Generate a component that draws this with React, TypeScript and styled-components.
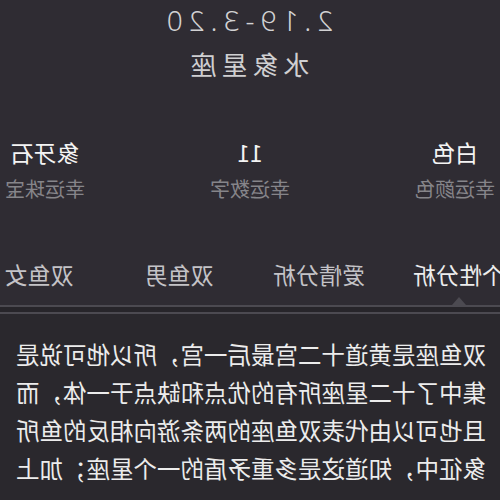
import styled, { createGlobalStyle } from 'styled-components';

const GlobalStyle = createGlobalStyle`
  html, body {
    margin: 0;
    padding: 0;
    background: #2f2c33;
    overflow: hidden;
  }
`;

const stats = [
  { value: '白色', label: '幸运颜色' },
  { value: '11', label: '幸运数字' },
  { value: '象牙石', label: '幸运珠宝' },
];

const tabs = ['个性分析', '爱情分析', '双鱼男', '双鱼女'];

const bodyText =
  '双鱼座是黄道十二宫最后一宫，所以他可说是集中了十二星座所有的优点和缺点于一体，而且也可以由代表双鱼座的两条游向相反的鱼所象征中，知道这是多重矛盾的一个星座；加上';

export default function App() {
  return (
    <>
      <GlobalStyle />
      <Page>
        <Header>
          <DateRange>2.19-3.20</DateRange>
          <Element>水象星座</Element>
        </Header>

        <StatsRow>
          {stats.map(({ value, label }) => (
            <Stat key={label}>
              <StatValue>{value}</StatValue>
              <StatLabel>{label}</StatLabel>
            </Stat>
          ))}
        </StatsRow>

        <TabBar>
          {tabs.map((t, i) => (
            <Tab key={t} active={i === 0}>
              {t}
              {i === 0 && <Marker />}
            </Tab>
          ))}
        </TabBar>
        <Divider />

        <Body>{bodyText}</Body>
      </Page>
    </>
  );
}

//#region STYLED COMPONENTS
const Page = styled.div`
  width: 500px;
  height: 500px;
  overflow: hidden;
  background: #2f2c33;
  transform: scaleX(-1);
  font-family: 'Noto Sans CJK SC', 'Noto Sans', sans-serif;
  display: flex;
  flex-direction: column;
`;

const Header = styled.div`
  display: flex;
  flex-direction: column;
  align-items: center;
`;

const DateRange = styled.div`
  font-family: 'Noto Sans', sans-serif;
  font-size: 28px;
  line-height: 40px;
  letter-spacing: 6px;
  padding-left: 6px;
  color: #d2d2d4;
  font-weight: 300;
`;

const Element = styled.div`
  margin-top: 6px;
  font-size: 26px;
  line-height: 36px;
  letter-spacing: 5px;
  padding-left: 5px;
  color: #cfcfd1;
`;

const StatsRow = styled.div`
  margin-top: 55px;
  padding: 0 5px;
  display: flex;
  justify-content: space-between;
`;

const Stat = styled.div`
  width: 80px;
  display: flex;
  flex-direction: column;
  align-items: center;
  gap: 7px;
`;

const StatValue = styled.div`
  font-size: 23px;
  line-height: 30px;
  color: #f4f4f4;
  white-space: nowrap;
`;

const StatLabel = styled.div`
  font-size: 20px;
  line-height: 30px;
  color: #86858a;
  white-space: nowrap;
`;

const TabBar = styled.div`
  margin-top: 50px;
  margin-left: -29px;
  height: 51px;
  display: flex;
`;

const Tab = styled.div<{ active: boolean }>`
  position: relative;
  flex: 0 0 140px;
  text-align: center;
  font-size: 23px;
  line-height: 40px;
  color: ${({ active }) => (active ? '#ededed' : '#c4c3c7')};
  white-space: nowrap;
`;

const Marker = styled.span`
  position: absolute;
  left: 50%;
  bottom: 0;
  margin-left: -7px;
  width: 0;
  height: 0;
  border-left: 7px solid transparent;
  border-right: 7px solid transparent;
  border-bottom: 8px solid #4c4a51;
`;

const Divider = styled.div`
  height: 5px;
  border-top: 2px solid #4c4a51;
  border-bottom: 2px solid #4c4a51;
  background: #27252a;
`;

const Body = styled.div`
  flex: 1;
  background: #2a282d;
  padding: 21px 14px 0;
  font-size: 23.5px;
  line-height: 38px;
  color: #ececec;
  word-break: break-all;
`;
//#endregion
